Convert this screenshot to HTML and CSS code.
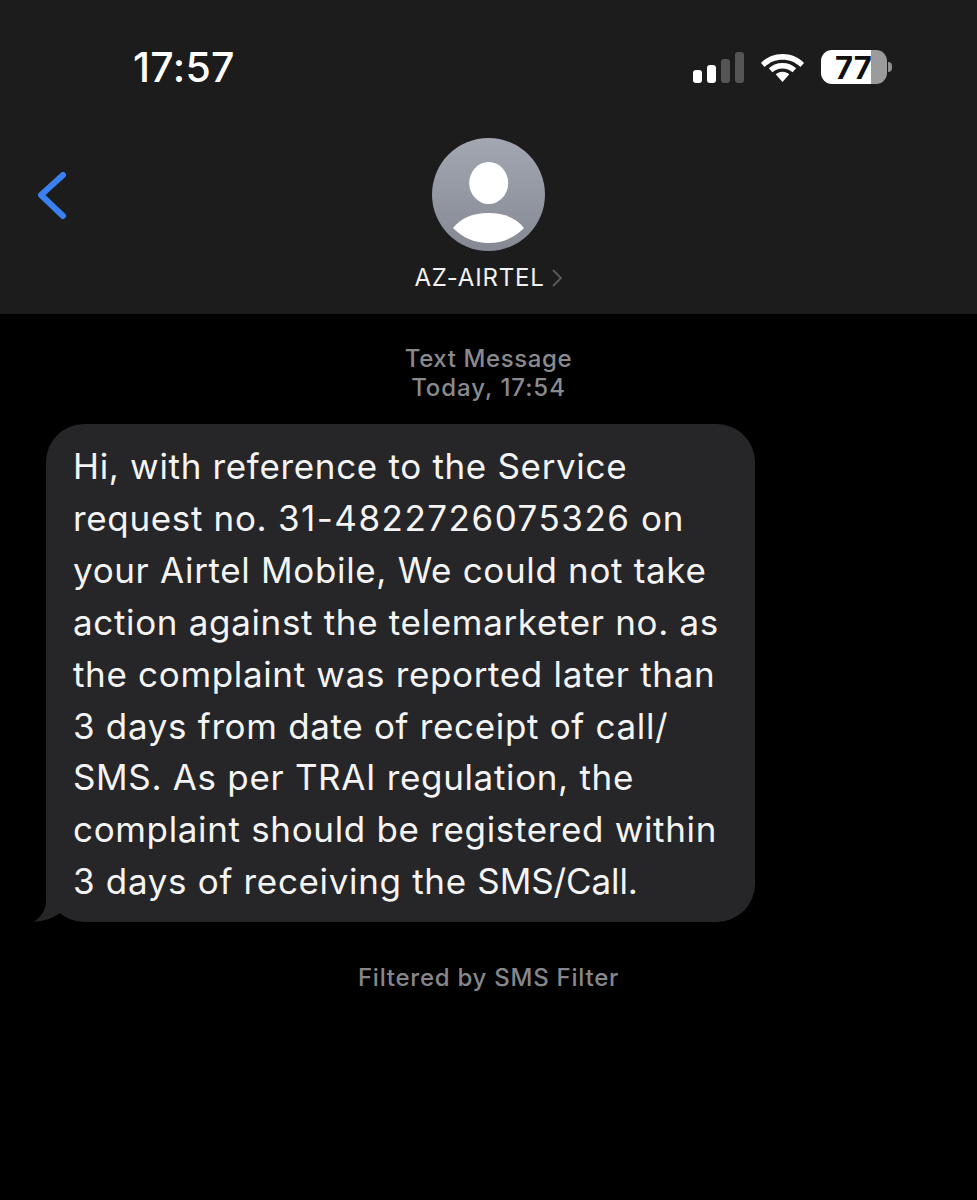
FILE: index.html
```html
<!DOCTYPE html>
<html lang="en">
<head>
<meta charset="utf-8">
<title>AZ-AIRTEL</title>
<link rel="stylesheet" href="styles.css">
</head>
<body>
<header class="header">
  <div class="status">
    <span class="time">17:57</span>
    <div class="status-icons">
      <div class="signal">
        <span class="bar bar-1"></span><span class="bar bar-2"></span><span class="bar bar-3"></span><span class="bar bar-4"></span>
      </div>
      <svg class="wifi" width="43" height="33" viewBox="2 3 40 29"><path d="M22 5C14 5 7.500 8 2 13.200L5.300 17C10 12.500 15.500 10.200 22 10.200S34 12.500 38.700 17L42 13.200C36.500 8 30 5 22 5Z" fill="#fff"/><path d="M22 13.300C17 13.300 13 15 9.300 18.300L12.600 22C15.200 19.700 18.300 18.500 22 18.500S28.800 19.700 31.400 22L34.700 18.300C31 15 27 13.300 22 13.300Z" fill="#fff"/><path d="M22 21.500C19.500 21.500 17.500 22.300 15.700 23.800L22 31L28.300 23.800C26.500 22.300 24.500 21.500 22 21.500Z" fill="#fff"/></svg>
      <div class="battery">
        <div class="battery-body"><span class="battery-level">77</span></div>
        <span class="battery-cap"></span>
      </div>
    </div>
  </div>
  <div class="contact">
    <svg class="back" width="32" height="52" viewBox="0 0 32 52"><path d="M27 6 5 26l22 21" fill="none" stroke="#3a80f0" stroke-width="6" stroke-linecap="round" stroke-linejoin="round"/></svg>
    <svg class="avatar" width="113" height="113" viewBox="0 0 113 113"><defs><linearGradient id="av" x1="0" y1="0" x2="0" y2="1"><stop offset="0" stop-color="#a3a7b2"/><stop offset="1" stop-color="#858994"/></linearGradient></defs><circle cx="56.500" cy="56.500" r="56.500" fill="url(#av)"/><ellipse cx="56.700" cy="45" rx="19.500" ry="21" fill="#fff"/><path d="M21 90C29 80 41 75 56.500 75S84 80 92 90C82 100 70 105 56.500 105S31 100 21 90Z" fill="#fff"/></svg>
    <div class="name-row">
      <span class="name">AZ-AIRTEL</span>
      <svg class="chev" width="12" height="20" viewBox="0 0 12 20"><path d="M2 2l8 8-8 8" fill="none" stroke="#5b5b5e" stroke-width="1.800"/></svg>
    </div>
  </div>
</header>
<main class="thread">
  <p class="stamp">Text Message<br><span class="today">Today, 17:54</span></p>
  <div class="bubble">
    <p class="msg">Hi, with reference to the Service<br>request no. <span class="num">31-4822726075326</span> on<br>your Airtel Mobile, We could not take<br>action against the telemarketer no. as<br>the complaint was reported later than<br>3 days from date of receipt of call/<br>SMS. As per TRAI regulation, the<br>complaint should be registered within<br>3 days of receiving the <span class="tight">SMS/Call.</span></p>
    <svg class="tail" width="34" height="40" viewBox="0 0 34 40"><path d="M13 0V18C13 27 8 34 1 38.500C10 39 20 35 27 30Z" fill="#262628"/></svg>
  </div>
  <p class="filter">Filtered by SMS Filter</p>
</main>
</body>
</html>
```
FILE: styles.css
```css
* { box-sizing: border-box; }
html, body { margin: 0; padding: 0; }
body { background: #000; font-family: Inter, "Liberation Sans", sans-serif; min-height: 1200px; overflow: hidden; }
.header { background: #1c1c1d; height: 314px; display: flex; flex-direction: column; }
.status { display: flex; justify-content: space-between; align-items: center; height: 134px; padding: 0 85px 0 133px; }
.time { color: #fff; font-size: 41px; font-weight: 500; letter-spacing: 0.3px; }
.status-icons { display: flex; align-items: center; gap: 17px; }
.signal { display: flex; align-items: flex-end; gap: 4.5px; height: 31px; }
.bar { width: 9.5px; border-radius: 3px; background: #fff; display: block; }
.bar-1 { height: 13px; }
.bar-2 { height: 18px; }
.bar-3 { height: 24px; background: #555; }
.bar-4 { height: 31px; background: #555; }
.battery { display: flex; align-items: center; gap: 1px; }
.battery-body { width: 66px; height: 34px; border-radius: 11px; background: linear-gradient(90deg, #fff 0 75.700%, #9b9b9b 75.700% 100%); display: flex; align-items: center; padding-left: 14px; }
.battery-level { color: #111; font-size: 31px; font-weight: 700; line-height: 1; }
.battery-cap { width: 4px; height: 10px; background: #8f8f8f; border-radius: 0 4px 4px 0; }
.contact { position: relative; display: flex; flex-direction: column; align-items: center; padding-top: 4px; }
.back { position: absolute; left: 36px; top: 35px; }
.name-row { display: flex; align-items: center; gap: 6px; margin-top: 12px; }
.name { color: #f2f2f2; font-size: 24px; letter-spacing: 0.8px; line-height: 30px; }
.thread { display: flex; flex-direction: column; align-items: flex-start; }
.stamp { align-self: center; margin: 30px 0 22px; text-align: center; color: #8a8a8e; font-size: 24px; letter-spacing: 0.6px; line-height: 29px; font-weight: 500; }
.today { letter-spacing: 0.95px; }
.bubble { position: relative; margin-left: 46px; width: 709px; height: 498px; background: #262628; border-radius: 38px; padding: 17px 0 0 27px; }
.msg { margin: 0; color: #f4f4f5; font-size: 35px; letter-spacing: 0.65px; word-spacing: 0.1px; line-height: 51.9px; white-space: nowrap; }
.num { letter-spacing: 1.5px; }
.tight { letter-spacing: -0.1px; }
.tail { position: absolute; left: -13px; top: 459px; }
.filter { align-self: center; margin: 41px 0 0; color: #87878b; font-size: 24px; letter-spacing: 0.75px; line-height: 30px; font-weight: 500; }
```
